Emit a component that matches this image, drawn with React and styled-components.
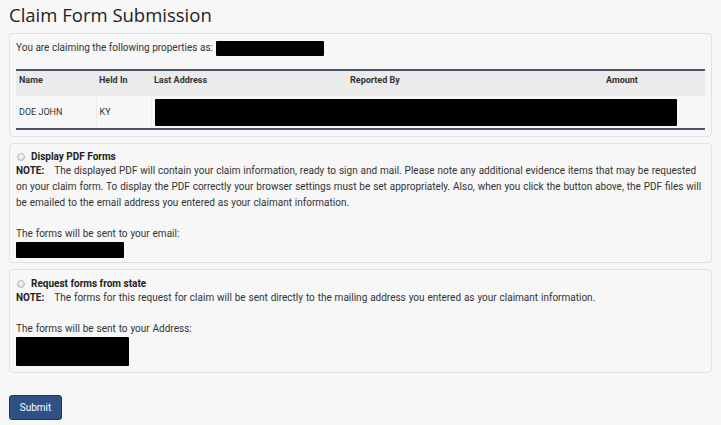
import React from "react";
import styled, { createGlobalStyle } from "styled-components";

const Global = createGlobalStyle`
  html, body { margin: 0; padding: 0; background: #f7f7f7; }
  body { font-family: Roboto, "Liberation Sans", sans-serif; color: #333; }
`;

const Page = styled.div`
  padding: 3px 9px 0 9px;
  width: 703px;
`;

const Title = styled.h1`
  margin: 0 0 6px 0;
  font-family: "Open Sans", "Liberation Sans", sans-serif;
  font-weight: 400;
  font-size: 18.5px;
  line-height: 24px;
  height: 24px;
  color: #222;
`;

const Panel = styled.div`
  border: 1px solid #e1e1e1;
  border-radius: 4px;
  background: #f7f7f7;
  padding: ${(p) => p.$pad || "6px"};
  margin-bottom: ${(p) => p.$mb || "6px"};
  font-size: 10px;
  line-height: 16px;
`;

const Line = styled.div`
  display: flex;
  align-items: center;
  gap: 3px;
  height: 16px;
`;

const Redact = styled.span`
  display: block;
  background: #000;
  border-radius: 1px;
  width: ${(p) => p.$w}px;
  height: ${(p) => p.$h}px;
`;

const Table = styled.table`
  width: 100%;
  border-collapse: collapse;
  margin-top: 13px;
  border-top: 2px solid #4a5568;
  border-bottom: 2px solid #4a5568;
  font-size: 9px;
  line-height: 12px;
`;

const Th = styled.th`
  text-align: left;
  vertical-align: top;
  font-weight: 700;
  color: #333;
  background: #ebebeb;
  padding: 3px 3px 0 3px;
  height: 22px;
  width: ${(p) => p.$w || "auto"};
`;

const Td = styled.td`
  padding: 0 3px;
  height: 32px;
  color: #333;
  border-left: ${(p) => (p.$first ? "none" : "1px solid #ececec")};
`;

const OptionHead = styled.label`
  display: flex;
  align-items: center;
  gap: 6px;
  height: 13px;
  line-height: 13px;
  font-weight: 700;
  color: #222;
  margin-left: 1px;
`;

const Radio = styled.span`
  display: inline-block;
  box-sizing: border-box;
  width: 8px;
  height: 8px;
  border-radius: 50%;
  border: 1px solid #b8b8b8;
  background: radial-gradient(circle at 50% 35%, #fafafa, #d2d2d2);
`;

const Note = styled.p`
  margin: 0;
  color: #333;
  word-spacing: 0.4px;
`;

const NoteLabel = styled.b`
  color: #222;
  margin-right: 10px;
`;

const Spacer = styled.div`
  height: ${(p) => p.$h}px;
`;

const Submit = styled.button`
  display: block;
  margin-top: 22px;
  background: #2f5085;
  color: #fff;
  border: 1px solid #1e355d;
  border-radius: 3px;
  font-family: Roboto, "Liberation Sans", sans-serif;
  font-size: 10px;
  width: 53px;
  height: 25px;
  padding: 0;
`;

export default function App() {
  return (
    <>
      <Global />
      <Page>
        <Title>Claim Form Submission</Title>
        <Panel $pad="6px 6px 6px 6px">
          <Line>
            You are claiming the following properties as:
            <Redact $w={108} $h={15} />
          </Line>
          <Table>
            <thead>
              <tr>
                <Th $w="74px">Name</Th>
                <Th $w="49px">Held In</Th>
                <Th $w="190px">Last Address</Th>
                <Th $w="250px">Reported By</Th>
                <Th>Amount</Th>
              </tr>
            </thead>
            <tbody>
              <tr>
                <Td $first>DOE JOHN</Td>
                <Td>KY</Td>
                <Td colSpan={3}>
                  <Redact $w={522} $h={27} />
                </Td>
              </tr>
            </tbody>
          </Table>
        </Panel>

        <Panel $pad="6px 6px 4px 6px">
          <OptionHead>
            <Radio />
            Display PDF Forms
          </OptionHead>
          <Note>
            <NoteLabel>NOTE:</NoteLabel>
            The displayed PDF will contain your claim information, ready to sign and mail. Please note any additional evidence items that may be requested on your claim form. To display the PDF correctly your browser settings must be set appropriately. Also, when you click the button above, the PDF files will be emailed to the email address you entered as your claimant information.
          </Note>
          <Spacer $h={15} />
          <Note>The forms will be sent to your email:</Note>
          <Redact $w={108} $h={16} />
        </Panel>

        <Panel $pad="7px 6px 6px 6px" $mb="0">
          <OptionHead>
            <Radio />
            Request forms from state
          </OptionHead>
          <Note>
            <NoteLabel>NOTE:</NoteLabel>
            The forms for this request for claim will be sent directly to the mailing address you entered as your claimant information.
          </Note>
          <Spacer $h={15} />
          <Note>The forms will be sent to your Address:</Note>
          <Redact $w={113} $h={29} />
        </Panel>

        <Submit>Submit</Submit>
      </Page>
    </>
  );
}
